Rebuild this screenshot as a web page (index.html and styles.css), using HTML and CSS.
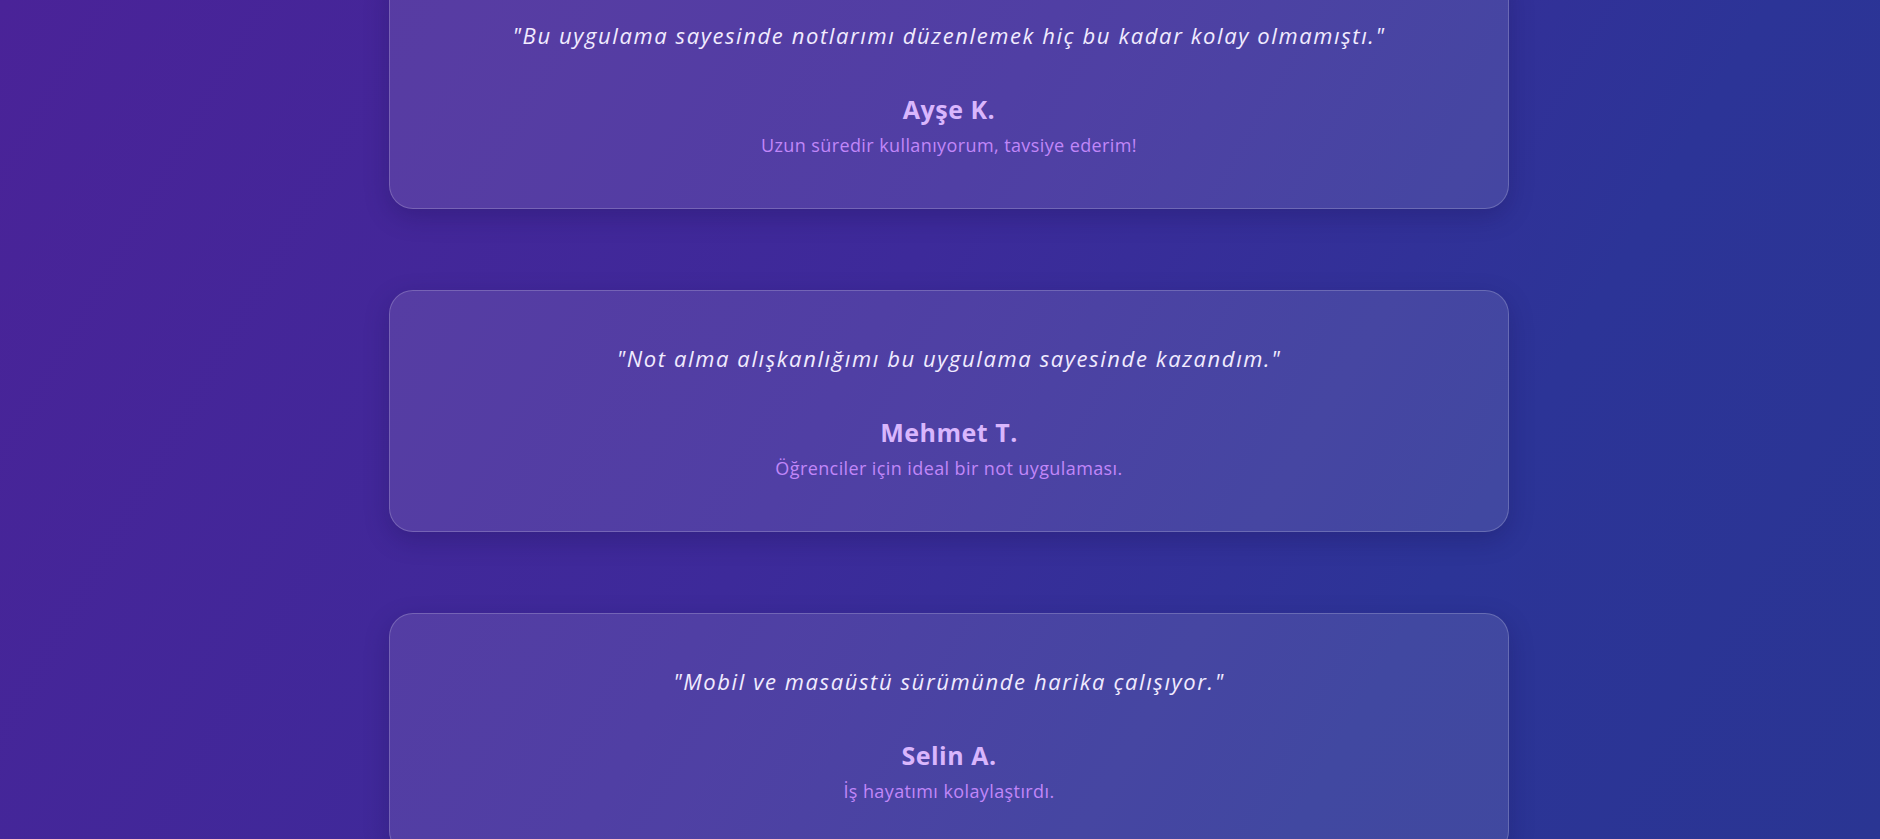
FILE: index.html
```html
<!DOCTYPE html>
<html lang="tr">
<head>
<meta charset="utf-8">
<title>Yorumlar</title>
<link rel="stylesheet" href="styles.css">
</head>
<body>
<main class="page">
  <section class="testimonials">
    <article class="card">
      <p class="quote">"Bu uygulama sayesinde notlarımı düzenlemek hiç bu kadar kolay olmamıştı."</p>
      <h3 class="name">Ayşe K.</h3>
      <p class="note">Uzun süredir kullanıyorum, tavsiye ederim!</p>
    </article>
    <article class="card">
      <p class="quote">"Not alma alışkanlığımı bu uygulama sayesinde kazandım."</p>
      <h3 class="name">Mehmet T.</h3>
      <p class="note">Öğrenciler için ideal bir not uygulaması.</p>
    </article>
    <article class="card">
      <p class="quote">"Mobil ve masaüstü sürümünde harika çalışıyor."</p>
      <h3 class="name">Selin A.</h3>
      <p class="note">İş hayatımı kolaylaştırdı.</p>
    </article>
  </section>
</main>
</body>
</html>
```

FILE: styles.css
```css
html, body {
  margin: 0;
  padding: 0;
  height: 100%;
  overflow: hidden;
}

body {
  font-family: "Open Sans", "Noto Sans", sans-serif;
  background: linear-gradient(120deg, #4a2398 0%, #3d2a9a 45%, #2c3497 75%, #2a3593 100%);
}

.page {
  padding-left: 18px;
  min-height: 100%;
}

.testimonials {
  max-width: 1120px;
  margin: -33px auto 0;
  display: flex;
  flex-direction: column;
  gap: 81px;
}

.card {
  box-sizing: border-box;
  height: 242px;
  padding: 52px 32px 0;
  border-radius: 24px;
  background: rgba(255, 255, 255, 0.1);
  border: 1px solid rgba(255, 255, 255, 0.2);
  box-shadow: 0 8px 24px rgba(20, 10, 70, 0.25);
  text-align: center;
}

.quote {
  margin: 0;
  font-style: italic;
  font-size: 22px;
  line-height: 30px;
  letter-spacing: 1.6px;
  color: #f1ebff;
}

.name {
  margin: 44px 0 0;
  font-size: 25px;
  line-height: 30px;
  font-weight: 700;
  letter-spacing: 0.5px;
  color: #d9b6fd;
}

.note {
  margin: 9px 0 0;
  font-size: 18px;
  line-height: 24px;
  letter-spacing: 0.4px;
  color: #c187f9;
}
```
